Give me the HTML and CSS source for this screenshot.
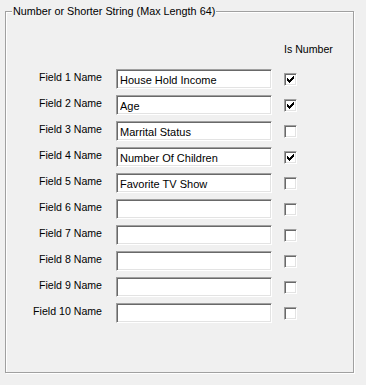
FILE: index.html
```html
<!DOCTYPE html>
<html lang="en">
<head>
  <meta charset="UTF-8">
  <title>Field Names</title>
  <link rel="stylesheet" href="styles.css">
</head>
<body>
  <div class="group">
    <span class="group-title">Number or Shorter String (Max Length 64)</span>

    <div class="fields">
      <div class="head">Is Number</div>

      <label class="name">Field 1 Name</label>
      <input class="text" type="text" value="House Hold Income">
      <span class="check on"><svg viewBox="0 0 7 7" width="7" height="7"><path d="M0 2h1v3H0zM1 3h1v3H1zM2 4h1v3H2zM3 3h1v3H3zM4 2h1v3H4zM5 1h1v3H5zM6 0h1v3H6z"/></svg></span>

      <label class="name">Field 2 Name</label>
      <input class="text" type="text" value="Age">
      <span class="check on"><svg viewBox="0 0 7 7" width="7" height="7"><path d="M0 2h1v3H0zM1 3h1v3H1zM2 4h1v3H2zM3 3h1v3H3zM4 2h1v3H4zM5 1h1v3H5zM6 0h1v3H6z"/></svg></span>

      <label class="name">Field 3 Name</label>
      <input class="text" type="text" value="Marrital Status">
      <span class="check"></span>

      <label class="name">Field 4 Name</label>
      <input class="text" type="text" value="Number Of Children">
      <span class="check on"><svg viewBox="0 0 7 7" width="7" height="7"><path d="M0 2h1v3H0zM1 3h1v3H1zM2 4h1v3H2zM3 3h1v3H3zM4 2h1v3H4zM5 1h1v3H5zM6 0h1v3H6z"/></svg></span>

      <label class="name">Field 5 Name</label>
      <input class="text" type="text" value="Favorite TV Show">
      <span class="check"></span>

      <label class="name">Field 6 Name</label>
      <input class="text" type="text" value="">
      <span class="check"></span>

      <label class="name">Field 7 Name</label>
      <input class="text" type="text" value="">
      <span class="check"></span>

      <label class="name">Field 8 Name</label>
      <input class="text" type="text" value="">
      <span class="check"></span>

      <label class="name">Field 9 Name</label>
      <input class="text" type="text" value="">
      <span class="check"></span>

      <label class="name">Field 10 Name</label>
      <input class="text" type="text" value="">
      <span class="check"></span>
    </div>
  </div>
</body>
</html>
```

FILE: styles.css
```css
* {
  margin: 0;
  padding: 0;
  box-sizing: border-box;
}

body {
  font-family: 'Liberation Sans', Arial, sans-serif;
  font-size: 10.6px;
  color: #000;
  background-color: #f0f0f0;
  width: 366px;
  height: 385px;
  overflow: hidden;
  padding: 11px 12px 12px 5px;
}

/* etched group box */
.group {
  position: relative;
  height: 362px;
  border: 1px solid #a0a0a0;
  box-shadow: 1px 1px 0 #fff, inset 1px 1px 0 #fff;
}

.group-title {
  position: absolute;
  top: -7px;
  left: 6px;
  padding: 0 1px;
  font-size: 10.8px;
  line-height: 13px;
  background-color: #f0f0f0;
  white-space: nowrap;
}

.fields {
  display: grid;
  grid-template-columns: 96px 156px 13px;
  grid-auto-rows: 20px;
  column-gap: 14px;
  row-gap: 6px;
  padding-top: 31px;
}

.head {
  grid-column: 3;
  line-height: 13px;
  white-space: nowrap;
  margin-left: -2px;
  margin-bottom: 8px;
  align-self: start;
}

.fields .head + .name {
  grid-column: 1;
}

.name {
  text-align: right;
  line-height: 13px;
  padding-top: 2px;
  white-space: nowrap;
}

.text {
  width: 156px;
  height: 20px;
  font: inherit;
  font-size: 11px;
  color: #000;
  background-color: #fff;
  padding: 1px 3px 0;
  border: 1px solid;
  border-color: #a0a0a0 #fff #fff #a0a0a0;
  box-shadow: inset 1px 1px 0 #696969, inset -1px -1px 0 #e3e3e3;
  outline: none;
}

.check {
  width: 13px;
  height: 13px;
  margin-left: -2px;
  align-self: center;
  background-color: #fff;
  border: 1px solid;
  border-color: #a0a0a0 #fff #fff #a0a0a0;
  box-shadow: inset 1px 1px 0 #696969, inset -1px -1px 0 #e3e3e3;
  display: flex;
  align-items: center;
  justify-content: center;
}

.check svg {
  display: block;
  fill: #000;
  shape-rendering: crispEdges;
}
```
